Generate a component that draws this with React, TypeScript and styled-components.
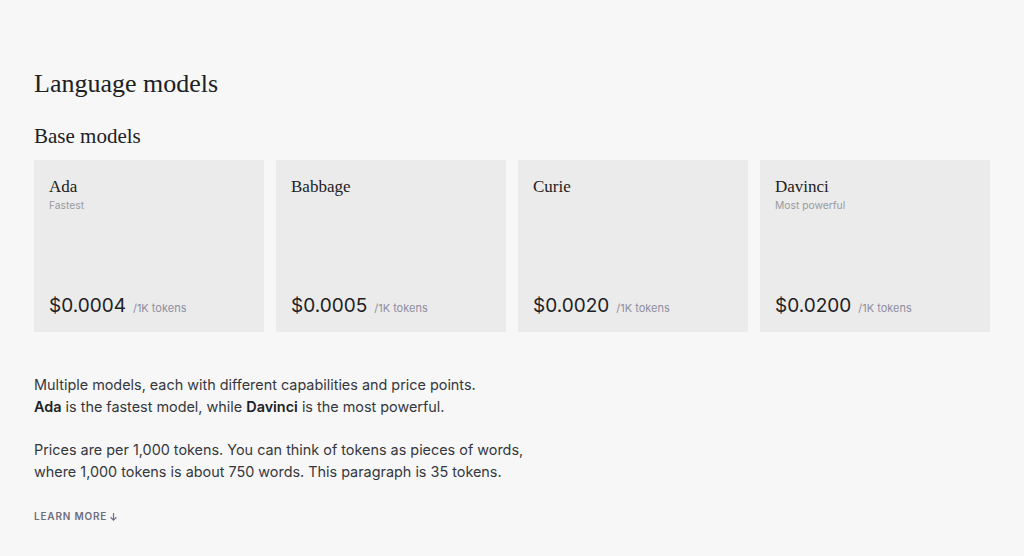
import React from "react";
import styled, { createGlobalStyle } from "styled-components";

const Global = createGlobalStyle`
  html, body { margin: 0; padding: 0; background: #f7f7f7; }
  body { font-family: Inter, "Noto Sans", sans-serif; color: #353740; }
`;

const Page = styled.main`
  padding: 68px 34px 0 34px;
  width: 956px;
`;

const Title = styled.h1`
  margin: 0;
  font-family: "Liberation Serif", serif;
  font-weight: 400;
  font-size: 26px;
  line-height: 32px;
  color: #202123;
`;

const Subtitle = styled.h2`
  margin: 23px 0 0 0;
  font-family: "Liberation Serif", serif;
  font-weight: 400;
  font-size: 21px;
  line-height: 26px;
  color: #202123;
`;

const Grid = styled.div`
  display: grid;
  grid-template-columns: repeat(4, 1fr);
  gap: 12px;
  margin-top: 11px;
`;

const Card = styled.div`
  background: #ebebeb;
  height: 172px;
  padding: 17px 15px 15px 15px;
  box-sizing: border-box;
  display: flex;
  flex-direction: column;
`;

const CardName = styled.div`
  font-family: "Liberation Serif", serif;
  font-size: 17px;
  line-height: 20px;
  color: #202123;
`;

const CardNote = styled.div`
  font-size: 10.3px;
  line-height: 16px;
  color: #9a9a9f;
`;

const Price = styled.div`
  margin-top: auto;
  display: flex;
  align-items: baseline;
  gap: 7px;
`;

const Amount = styled.span`
  font-size: 19px;
  color: #202123;
`;

const Unit = styled.span`
  font-size: 11px;
  color: #8e8ea0;
`;

const Text = styled.p`
  margin: 0;
  font-size: 14.4px;
  line-height: 22px;
  color: #353740;
  & + & { margin-top: 21px; }
  b { font-weight: 600; color: #202123; }
`;

const TextBlock = styled.div`
  margin-top: 42px;
`;

const More = styled.a`
  display: inline-flex;
  align-items: center;
  gap: 2px;
  margin-top: 27px;
  font-size: 10px;
  font-weight: 600;
  letter-spacing: 0.08em;
  color: #6e6e80;
  text-transform: uppercase;
`;

const models = [
  { name: "Ada", note: "Fastest", price: "$0.0004" },
  { name: "Babbage", note: "", price: "$0.0005" },
  { name: "Curie", note: "", price: "$0.0020" },
  { name: "Davinci", note: "Most powerful", price: "$0.0200" },
];

export default function App() {
  return (
    <>
      <Global />
      <Page>
        <Title>Language models</Title>
        <Subtitle>Base models</Subtitle>
        <Grid>
          {models.map((m) => (
            <Card key={m.name}>
              <CardName>{m.name}</CardName>
              <CardNote>{m.note}</CardNote>
              <Price>
                <Amount>{m.price}</Amount>
                <Unit>/1K tokens</Unit>
              </Price>
            </Card>
          ))}
        </Grid>
        <TextBlock>
          <Text>
            Multiple models, each with different capabilities and price points.
            <br />
            <b>Ada</b> is the fastest model, while <b>Davinci</b> is the most powerful.
          </Text>
          <Text>
            Prices are per 1,000 tokens. You can think of tokens as pieces of words,
            <br />
            where 1,000 tokens is about 750 words. This paragraph is 35 tokens.
          </Text>
        </TextBlock>
        <More>
          Learn more
          <svg width="9" height="9" viewBox="0 0 10 10" fill="none" stroke="currentColor" strokeWidth="1.3">
            <path d="M5 1v8M1.8 5.8 5 9l3.2-3.2" />
          </svg>
        </More>
      </Page>
    </>
  );
}
